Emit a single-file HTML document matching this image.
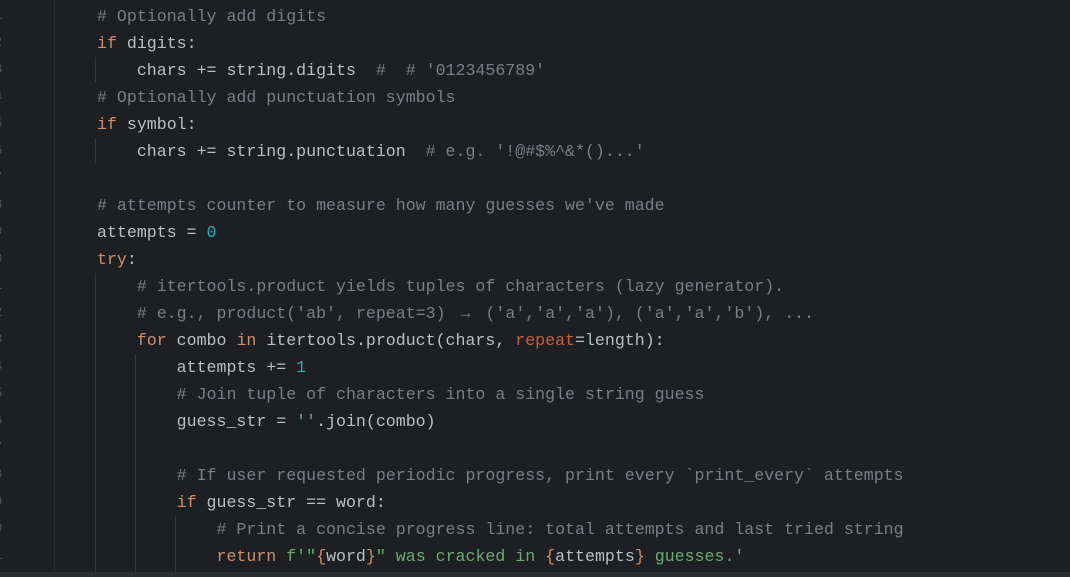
<!DOCTYPE html>
<html><head><style>
body{margin:0;width:1070px;height:577px;background:#1e1f22;overflow:hidden;position:relative;font-family:"Liberation Mono",monospace;}
.code{position:absolute;left:97px;top:3px;font-size:16.6px;line-height:27px;color:#bcbec4;white-space:pre;}
.k{color:#cf8e6d}.c{color:#7a7e85}.n{color:#2aacb8}.s{color:#6aab73}.p{color:#c8603f}
.ar{display:inline-block;width:20px;text-align:center}
.g{position:absolute;width:1px;background:#34363a}
.ln{position:absolute;left:-6px;top:3px;font-size:14px;line-height:27px;color:#4b5059;white-space:pre;font-family:"Liberation Mono",monospace}
.bar{position:absolute;left:0;top:572px;width:1070px;height:5px;background:#2b2d30}
</style></head><body>
<div class="ln">1
2
3
4
5
6
7
8
9
0
1
2
3
4
5
6
7
8
9
0
1</div>
<div class="g" style="left:54px;top:0;height:572px;background:#2b2d30"></div>
<div class="g" style="left:95px;top:57px;height:25px"></div>
<div class="g" style="left:95px;top:138px;height:25px"></div>
<div class="g" style="left:95px;top:273px;height:299px"></div>
<div class="g" style="left:135px;top:354px;height:218px"></div>
<div class="g" style="left:175px;top:516px;height:56px"></div>
<div class="code"><span class="c"># Optionally add digits</span>
<span class="k">if</span> digits:
    chars += string.digits  <span class="c">#  # '0123456789'</span>
<span class="c"># Optionally add punctuation symbols</span>
<span class="k">if</span> symbol:
    chars += string.punctuation  <span class="c"># e.g. '!@#$%^&amp;*()...'</span>

<span class="c"># attempts counter to measure how many guesses we've made</span>
attempts = <span class="n">0</span>
<span class="k">try</span>:
    <span class="c"># itertools.product yields tuples of characters (lazy generator).</span>
    <span class="c"># e.g., product('ab', repeat=3) <span class="ar">→</span> ('a','a','a'), ('a','a','b'), ...</span>
    <span class="k">for</span> combo <span class="k">in</span> itertools.product(chars, <span class="p">repeat</span>=length):
        attempts += <span class="n">1</span>
        <span class="c"># Join tuple of characters into a single string guess</span>
        guess_str = <span class="s">''</span>.join(combo)

        <span class="c"># If user requested periodic progress, print every `print_every` attempts</span>
        <span class="k">if</span> guess_str == word:
            <span class="c"># Print a concise progress line: total attempts and last tried string</span>
            <span class="k">return</span> <span class="s">f'"</span><span class="k">{</span>word<span class="k">}</span><span class="s">" was cracked in </span><span class="k">{</span>attempts<span class="k">}</span><span class="s"> guesses.'</span></div>
<div class="bar"></div>
</body></html>
